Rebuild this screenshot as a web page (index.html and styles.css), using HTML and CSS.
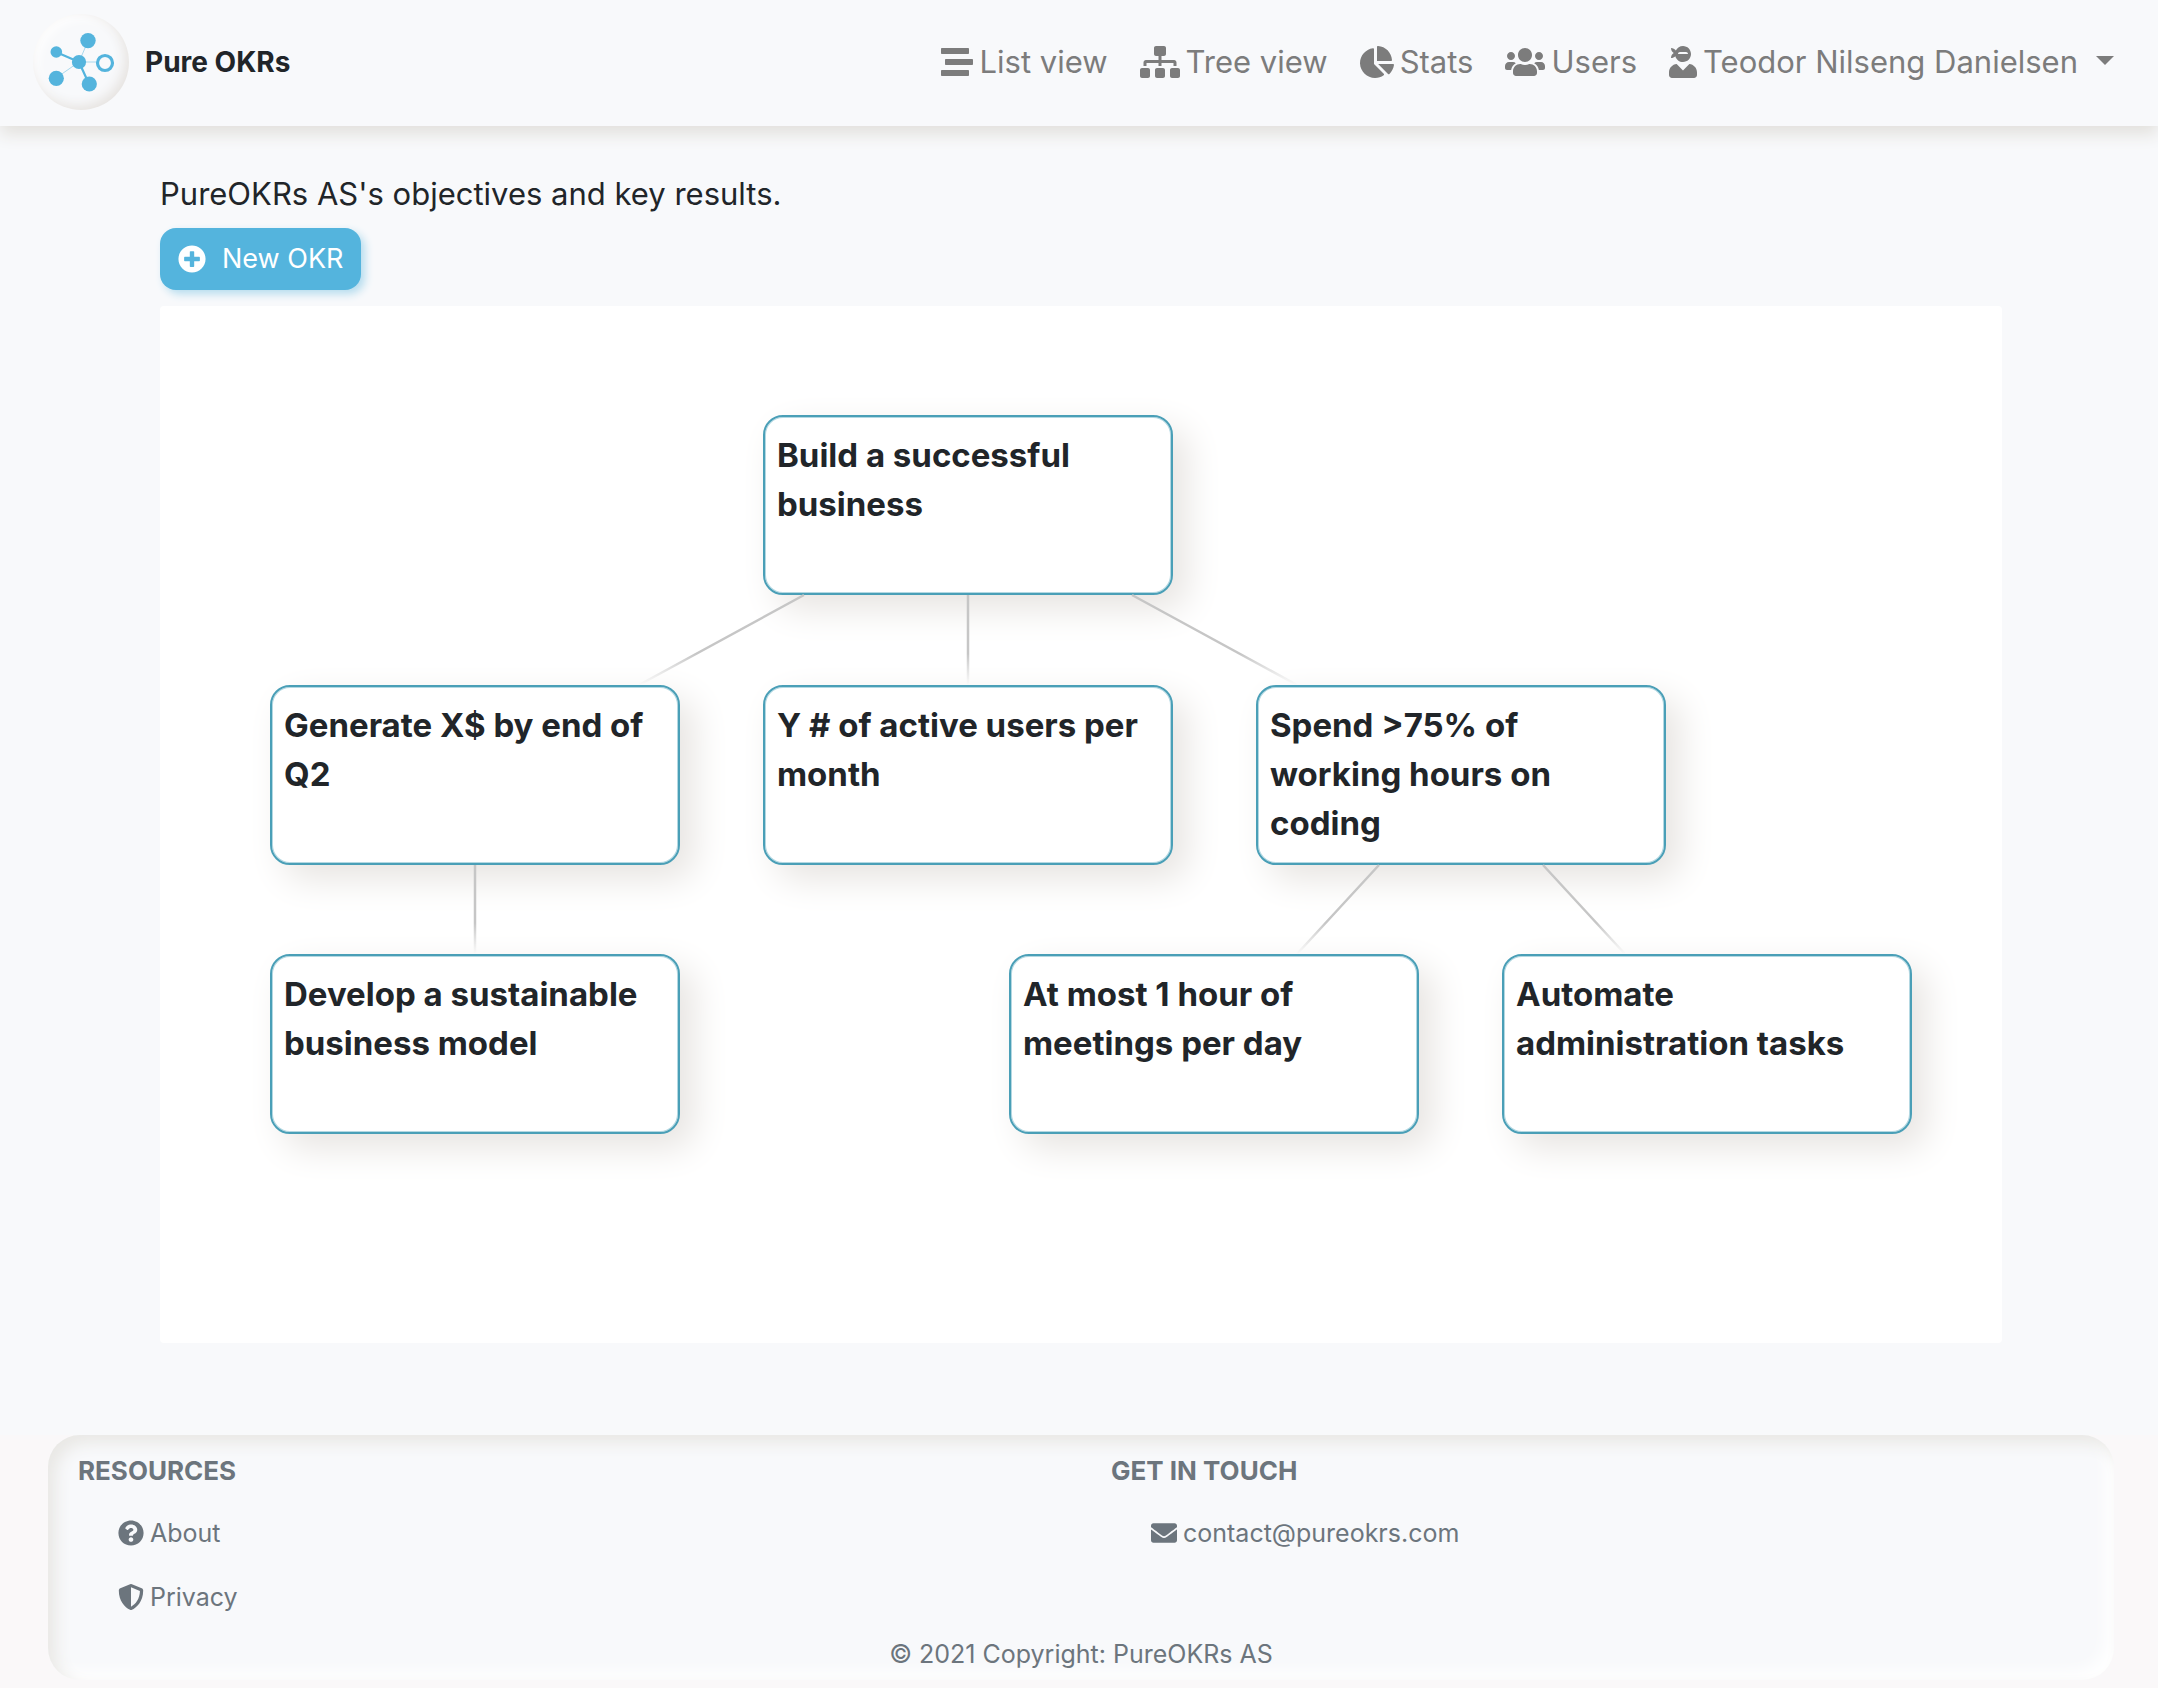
FILE: index.html
```html
<!DOCTYPE html>
<html lang="en">
<head>
<meta charset="utf-8">
<meta name="viewport" content="width=device-width, initial-scale=1">
<title>Pure OKRs</title>
<link rel="stylesheet" href="styles.css">
</head>
<body>
<header class="navbar">
  <a class="brand" href="#">
    <svg class="brand-logo" viewBox="0 0 96 96" aria-hidden="true">
      <g stroke="#a9d8ec" stroke-width="1"><path d="M46 48L55 27M46 48H64M46 48L23 64"/></g>
      <g stroke="#54b4dd" stroke-width="2.200"><path d="M46 48L23 38M46 48L56 70"/></g>
      <g fill="#54b4dd">
        <circle cx="55" cy="26.600" r="7.700"/><circle cx="23.300" cy="38" r="5.800"/><circle cx="46" cy="48" r="7.100"/>
        <circle cx="23.300" cy="64.300" r="7.600"/><circle cx="56.300" cy="70" r="7.600"/>
      </g>
      <circle cx="72" cy="49" r="7.500" fill="none" stroke="#54b4dd" stroke-width="3.200"/>
    </svg>
    <span>Pure OKRs</span>
  </a>
  <nav class="nav">
    <a class="nav-link" href="#"><svg class="icon" width="32" height="32" viewBox="0 0 512 512" aria-hidden="true"><path d="M16 128h416c8.840 0 16-7.160 16-16V48c0-8.840-7.160-16-16-16H16C7.160 32 0 39.160 0 48v64c0 8.840 7.160 16 16 16zm480 80H80c-8.840 0-16 7.160-16 16v64c0 8.840 7.160 16 16 16h416c8.840 0 16-7.160 16-16v-64c0-8.840-7.160-16-16-16zm-64 176H16c-8.840 0-16 7.160-16 16v64c0 8.840 7.160 16 16 16h416c8.840 0 16-7.160 16-16v-64c0-8.840-7.160-16-16-16z"/></svg>List view</a>
    <a class="nav-link" href="#"><svg class="icon" width="40" height="32" viewBox="0 0 640 512" aria-hidden="true"><path d="M128 352H32c-17.670 0-32 14.330-32 32v96c0 17.670 14.330 32 32 32h96c17.670 0 32-14.330 32-32v-96c0-17.670-14.330-32-32-32zm-24-80h192v48h48v-48h192v48h48v-57.590c0-21.170-17.230-38.410-38.410-38.410H344v-64h40c17.670 0 32-14.330 32-32V32c0-17.670-14.330-32-32-32H256c-17.670 0-32 14.330-32 32v96c0 17.670 14.330 32 32 32h40v64H94.410C73.230 224 56 241.230 56 262.410V320h48v-48zm264 80h-96c-17.670 0-32 14.330-32 32v96c0 17.670 14.330 32 32 32h96c17.670 0 32-14.330 32-32v-96c0-17.670-14.330-32-32-32zm240 0h-96c-17.670 0-32 14.330-32 32v96c0 17.670 14.330 32 32 32h96c17.670 0 32-14.330 32-32v-96c0-17.670-14.330-32-32-32z"/></svg>Tree view</a>
    <a class="nav-link" href="#"><svg class="icon" width="34" height="32" viewBox="0 0 544 512" aria-hidden="true"><path d="M527.790 288H290.500l158.030 158.030c6.040 6.040 15.980 6.530 22.190.680 38.700-36.460 65.320-85.610 73.130-140.860 1.340-9.460-6.510-17.850-16.060-17.850zm-15.830-64.800C503.720 103.740 408.260 8.280 288.800.040 279.680-.590 272 7.100 272 16.240V240h223.770c9.140 0 16.820-7.680 16.190-16.800zM224 288V50.710c0-9.550-8.390-17.400-17.840-16.060C86.990 51.490-4.100 155.600.140 280.370 4.500 408.510 114.830 513.590 243.030 511.980c50.400-.630 96.970-16.870 135.260-44.030 7.900-5.600 8.420-17.230 1.570-24.080L224 288z"/></svg>Stats</a>
    <a class="nav-link" href="#"><svg class="icon" width="40" height="32" viewBox="0 0 640 512" aria-hidden="true"><path d="M96 224c35.300 0 64-28.700 64-64s-28.700-64-64-64-64 28.700-64 64 28.700 64 64 64zm448 0c35.300 0 64-28.700 64-64s-28.700-64-64-64-64 28.700-64 64 28.700 64 64 64zm32 32h-64c-17.600 0-33.500 7.100-45.100 18.600 40.300 22.100 68.900 62 75.100 109.400h66c17.700 0 32-14.300 32-32v-32c0-35.300-28.700-64-64-64zm-256 0c61.900 0 112-50.100 112-112S381.900 32 320 32 208 82.100 208 144s50.100 112 112 112zm76.800 32h-8.300c-20.800 10-43.900 16-68.500 16s-47.600-6-68.500-16h-8.300C179.600 288 128 339.600 128 403.200V432c0 26.500 21.500 48 48 48h288c26.500 0 48-21.500 48-48v-28.800c0-63.600-51.600-115.200-115.200-115.200zm-223.700-13.400C161.500 263.100 145.600 256 128 256H64c-35.300 0-64 28.700-64 64v32c0 17.700 14.300 32 32 32h65.900c6.300-47.400 34.900-87.300 75.200-109.400z"/></svg>Users</a>
    <a class="nav-link" href="#" aria-haspopup="true"><svg class="icon" width="28" height="32" viewBox="0 0 448 512" aria-hidden="true"><path d="M325.400 289.200L224 390.600 122.600 289.200C54 295.300 0 352.200 0 422.400V464c0 26.500 21.500 48 48 48h352c26.500 0 48-21.500 48-48v-41.600c0-70.200-54-127.100-122.600-133.200zM32 192c27.300 0 51.800-11.500 69.200-29.700 15.100 53.900 64 93.700 122.800 93.700 70.700 0 128-57.300 128-128S294.700 0 224 0c-50.400 0-93.600 29.400-114.500 71.800C92.100 47.800 64 32 32 32c0 33.400 17.100 62.800 43.100 80-26 17.200-43.100 46.600-43.100 80zm144-96h96c17.700 0 32 14.300 32 32H144c0-17.700 14.300-32 32-32z"/></svg>Teodor Nilseng Danielsen<span class="caret"></span></a>
  </nav>
</header>

<main class="content">
  <p class="intro">PureOKRs AS's objectives and key results.</p>
  <button class="btn-new" type="button"><svg class="icon" width="28" height="28" viewBox="0 0 512 512" aria-hidden="true"><path d="M256 8C119 8 8 119 8 256s111 248 248 248 248-111 248-248S393 8 256 8zm144 276c0 6.600-5.400 12-12 12h-92v92c0 6.600-5.400 12-12 12h-56c-6.600 0-12-5.400-12-12v-92h-92c-6.600 0-12-5.400-12-12v-56c0-6.600 5.400-12 12-12h92v-92c0-6.600 5.400-12 12-12h56c6.600 0 12 5.400 12 12v92h92c6.600 0 12 5.400 12 12v56z"/></svg>New OKR</button>

  <section class="tree" aria-label="OKR tree">
    <article class="node node-root">Build a successful business</article>
    <article class="node node-revenue">Generate X$ by end of Q2</article>
    <article class="node node-users">Y # of active users per month</article>
    <article class="node node-coding">Spend &gt;75% of working hours on coding</article>
    <article class="node node-model">Develop a sustainable business model</article>
    <article class="node node-meetings">At most 1 hour of meetings per day</article>
    <article class="node node-admin">Automate administration tasks</article>
    <svg class="edges" width="1842" height="1037" aria-hidden="true">
      <defs>
        <linearGradient id="fade-1" gradientUnits="userSpaceOnUse" x1="0" y1="289" x2="0" y2="379">
          <stop offset="0.650" stop-color="#c6c6c6"/><stop offset="1" stop-color="#c6c6c6" stop-opacity="0"/>
        </linearGradient>
        <linearGradient id="fade-2" gradientUnits="userSpaceOnUse" x1="0" y1="559" x2="0" y2="648">
          <stop offset="0.650" stop-color="#c6c6c6"/><stop offset="1" stop-color="#c6c6c6" stop-opacity="0"/>
        </linearGradient>
      </defs>
      <g fill="none" stroke-width="2.500">
        <path stroke="url(#fade-1)" d="M644 289L479 379M808 289L808.010 379M972 289L1137 379"/>
        <path stroke="url(#fade-2)" d="M315 559L315.010 648M1219 559L1137 648M1383 559L1465 648"/>
      </g>
    </svg>
  </section>
</main>

<footer class="footer">
  <div class="footer-panel">
    <div class="footer-columns">
      <section>
        <h2 class="footer-title">RESOURCES</h2>
        <ul class="footer-links">
          <li><a href="#"><svg class="icon" width="26" height="26" viewBox="0 0 512 512" aria-hidden="true"><path d="M504 256c0 136.997-111.043 248-248 248S8 392.997 8 256C8 119.083 119.043 8 256 8s248 111.083 248 248zM262.655 90c-54.497 0-89.255 22.957-116.549 63.758-3.536 5.286-2.353 12.415 2.715 16.258l34.699 26.310c5.205 3.947 12.621 3.008 16.665-2.122 17.864-22.658 30.113-35.797 57.303-35.797 20.429 0 45.698 13.148 45.698 32.958 0 14.976-12.363 22.667-32.534 33.976C247.128 238.528 216 254.941 216 296v4c0 6.627 5.373 12 12 12h56c6.627 0 12-5.373 12-12v-1.333c0-28.462 83.186-29.647 83.186-106.667 0-58.002-60.165-102-116.531-102zM256 338c-25.365 0-46 20.635-46 46 0 25.364 20.635 46 46 46s46-20.636 46-46c0-25.365-20.635-46-46-46z"/></svg>About</a></li>
          <li><a href="#"><svg class="icon" width="26" height="26" viewBox="0 0 512 512" aria-hidden="true"><path d="M466.500 83.700l-192-80a48.150 48.150 0 0 0-36.900 0l-192 80C27.700 91.100 16 108.600 16 128c0 198.500 114.500 335.700 221.500 380.300 11.800 4.900 25.100 4.900 36.900 0C360.100 472.600 496 349.300 496 128c0-19.400-11.700-36.900-29.500-44.300zM256.100 446.300l-.1-381 175.900 73.300c-3.300 151.400-82.100 261.100-175.800 307.700z"/></svg>Privacy</a></li>
        </ul>
      </section>
      <section>
        <h2 class="footer-title">GET IN TOUCH</h2>
        <ul class="footer-links">
          <li><a href="mailto:contact@pureokrs.com"><svg class="icon" width="26" height="26" viewBox="0 0 512 512" aria-hidden="true"><path d="M502.300 190.800c3.900-3.100 9.700-.2 9.700 4.700V400c0 26.500-21.500 48-48 48H48c-26.500 0-48-21.500-48-48V195.600c0-5 5.700-7.800 9.700-4.700 22.400 17.400 52.100 39.500 154.100 113.600 21.100 15.400 56.700 47.800 92.200 47.600 35.700.3 72-32.800 92.300-47.600 102-74.100 131.600-96.300 154-113.700zM256 320c23.200.4 56.600-29.200 73.400-41.400 132.700-96.300 142.800-104.700 173.400-128.700 5.800-4.500 9.200-11.500 9.200-18.900v-19c0-26.500-21.500-48-48-48H48c-26.500 0-48 21.500-48 48v19c0 7.400 3.400 14.300 9.200 18.900 30.600 23.900 40.700 32.400 173.400 128.700 16.800 12.200 50.200 41.800 73.400 41.400z"/></svg>contact@pureokrs.com</a></li>
        </ul>
      </section>
    </div>
    <p class="copyright">© 2021 Copyright: PureOKRs AS</p>
  </div>
</footer>
</body>
</html>
```
FILE: styles.css
```css
* { box-sizing: border-box; }

body {
  margin: 0;
  min-height: 100vh;
  display: flex;
  flex-direction: column;
  background: #f8f9fb;
  color: #212529;
  font-family: Inter, "Liberation Sans", sans-serif;
  font-size: 31px;
  line-height: 48px;
}

a { color: inherit; text-decoration: none; }

.icon { flex: none; fill: currentColor; }

/* Top bar */
.navbar {
  display: flex;
  align-items: center;
  justify-content: space-between;
  padding: 14px 44px 16px 33px;
  background: #f8f9fb;
  box-shadow: 0 8px 16px #e2e0dc;
}

.brand {
  display: flex;
  align-items: center;
  gap: 16px;
  font-size: 28px;
  font-weight: 700;
}

.brand-logo {
  width: 96px;
  height: 96px;
  border-radius: 50%;
  box-shadow: inset -4px -4px 12px #e6e3e0, inset 4px 4px 12px #ffffff;
}

.nav {
  display: flex;
  align-items: center;
  gap: 32px;
  color: #7c7c7c;
}

.nav-link {
  display: flex;
  align-items: center;
  gap: 6px;
  white-space: nowrap;
}

.caret {
  margin: 0 0 4px 12px;
  border: 9px solid transparent;
  border-top-color: currentColor;
  border-bottom-width: 0;
}

/* Page body */
.content {
  flex: 1;
  display: flex;
  flex-direction: column;
  align-items: flex-start;
  padding: 44px 156px 92px 160px;
}

.intro { margin: 0 0 10px; }

.btn-new {
  display: flex;
  align-items: center;
  gap: 16px;
  height: 62px;
  margin-bottom: 16px;
  padding: 0 18px;
  border: 0;
  border-radius: 16px;
  background: #54b4dd;
  box-shadow: 4px 4px 8px #b5dcee;
  color: #ffffff;
  font: inherit;
  font-size: 27px;
}

/* OKR tree: nodes sit on a free canvas */
.tree {
  position: relative;
  width: 100%;
  height: 1037px;
  border-radius: 4px;
  background: #ffffff;
}

.edges { position: absolute; top: 0; left: 0; pointer-events: none; }

.node {
  position: absolute;
  width: 410px;
  height: 180px;
  padding: 14px 12px;
  border: 2px solid #4a9fb7;
  border-radius: 20px;
  background: #ffffff;
  box-shadow: inset 0 0 0 1px #b4d8e2, 14px 14px 36px #e7e4e1;
  font-size: 33px;
  line-height: 49px;
  font-weight: 700;
}

.node-root { left: 603px; top: 109px; }
.node-revenue { left: 110px; top: 379px; }
.node-users { left: 603px; top: 379px; }
.node-coding { left: 1096px; top: 379px; }
.node-model { left: 110px; top: 648px; }
.node-meetings { left: 849px; top: 648px; }
.node-admin { left: 1342px; top: 648px; }

/* Footer */
.footer {
  padding: 0 44px 8px 48px;
  background: #faf8f9;
  color: #6c757d;
  font-size: 25px;
  line-height: 40px;
}

.footer-panel {
  padding: 16px 0 6px;
  border-radius: 32px;
  background: #f8f9fb;
  box-shadow: inset 8px 8px 16px #e9e8e5, inset -8px -8px 16px #ffffff;
}

.footer-columns {
  display: grid;
  grid-template-columns: 1fr 1fr;
}

.footer-columns section { padding-left: 30px; }

.footer-title {
  margin: 0 0 22px;
  font-size: 26px;
  line-height: 40px;
  font-weight: 700;
}

.footer-links {
  display: flex;
  flex-direction: column;
  gap: 24px;
  margin: 0 0 17px;
  padding: 0 0 0 40px;
  list-style: none;
}

.footer-links a {
  display: flex;
  align-items: center;
  gap: 6px;
}

.copyright { margin: 0; text-align: center; }
```
